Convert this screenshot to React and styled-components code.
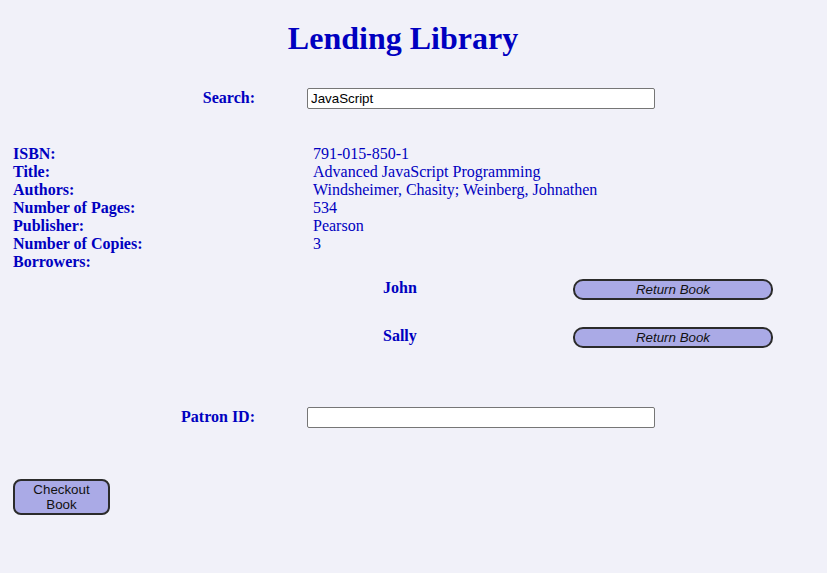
import React from "react";
import styled, { createGlobalStyle } from "styled-components";

const Global = createGlobalStyle`
  html, body { margin: 0; padding: 0; background: #f1f1f9; }
  body { font-family: "Liberation Serif", "Times New Roman", serif; color: #0000c0; }
  #root { min-height: 573px; }
`;

const Page = styled.div`
  padding: 0 0 0 8px;
  width: 819px;
  box-sizing: border-box;
`;

const Title = styled.h1`
  margin: 0;
  padding-top: 20px;
  width: 790px;
  text-align: center;
  font-size: 32px;
  font-weight: bold;
  line-height: 37px;
  color: #0000c0;
`;

const FormRow = styled.div`
  display: grid;
  grid-template-columns: 247px 348px;
  column-gap: 52px;
  align-items: center;
  margin-top: ${(p) => p.$top}px;
  height: 21px;
`;

const FormLabel = styled.label`
  text-align: right;
  font-weight: bold;
  font-size: 16px;
  line-height: 18px;
  margin-top: -2px;
`;

const TextInput = styled.input`
  box-sizing: border-box;
  width: 348px;
  height: 21px;
  border: 1px solid #767676;
  border-radius: 2px;
  background: #fff;
  padding: 1px 3px;
  font-family: "Liberation Sans", Arial, sans-serif;
  font-size: 13.33px;
  color: #000;
  outline: none;
`;

const Details = styled.dl`
  display: grid;
  grid-template-columns: 300px auto;
  margin: 36px 0 0 5px;
  font-size: 16px;
  line-height: 18px;
`;

const Term = styled.dt`
  font-weight: bold;
  margin: 0;
`;

const Value = styled.dd`
  margin: 0;
`;

const Borrowers = styled.div`
  display: grid;
  grid-template-columns: 190px 200px;
  grid-auto-rows: 21px;
  row-gap: 27px;
  align-items: center;
  margin: 8px 0 0 375px;
`;

const BorrowerName = styled.span`
  font-weight: bold;
  font-size: 16px;
  line-height: 18px;
  margin-top: -3px;
`;

const PillButton = styled.button`
  box-sizing: border-box;
  width: ${(p) => p.$w}px;
  height: ${(p) => p.$h}px;
  border: 2px solid #2b2b2b;
  border-radius: ${(p) => p.$r}px;
  background: #aaaae6;
  color: #111;
  font-family: "Liberation Sans", Arial, sans-serif;
  font-size: 13.33px;
  font-style: ${(p) => (p.$italic ? "italic" : "normal")};
  line-height: 15px;
  padding: 0;
  text-align: center;
  cursor: pointer;
`;

const CheckoutWrap = styled.div`
  margin: 51px 0 0 5px;
`;

export default function App() {
  const info = [
    ["ISBN:", "791-015-850-1"],
    ["Title:", "Advanced JavaScript Programming"],
    ["Authors:", "Windsheimer, Chasity; Weinberg, Johnathen"],
    ["Number of Pages:", "534"],
    ["Publisher:", "Pearson"],
    ["Number of Copies:", "3"],
    ["Borrowers:", ""],
  ];
  return (
    <Page>
      <Global />
      <Title>Lending Library</Title>
      <FormRow $top={31}>
        <FormLabel>Search:</FormLabel>
        <TextInput defaultValue="JavaScript" />
      </FormRow>
      <Details>
        {info.map(([k, v]) => (
          <React.Fragment key={k}>
            <Term>{k}</Term>
            <Value>{v}</Value>
          </React.Fragment>
        ))}
      </Details>
      <Borrowers>
        {["John", "Sally"].map((n) => (
          <React.Fragment key={n}>
            <BorrowerName>{n}</BorrowerName>
            <PillButton $w={200} $h={21} $r={10} $italic>
              Return Book
            </PillButton>
          </React.Fragment>
        ))}
      </Borrowers>
      <FormRow $top={59}>
        <FormLabel>Patron ID:</FormLabel>
        <TextInput />
      </FormRow>
      <CheckoutWrap>
        <PillButton $w={97} $h={36} $r={8}>
          Checkout
          <br />
          Book
        </PillButton>
      </CheckoutWrap>
    </Page>
  );
}
